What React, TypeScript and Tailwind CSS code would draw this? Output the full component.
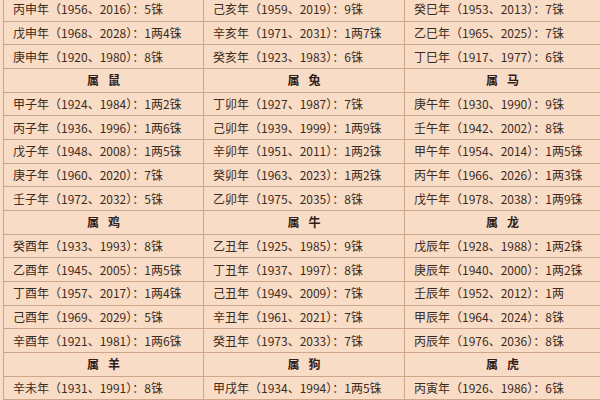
import React from "react";

type Cell = string | { h: [string, string] };

const col1: Cell[] = [
  "丙申年（1956、2016）：5铢",
  "戊申年（1968、2028）：1两4铢",
  "庚申年（1920、1980）：8铢",
  { h: ["属", "鼠"] },
  "甲子年（1924、1984）：1两2铢",
  "丙子年（1936、1996）：1两6铢",
  "戊子年（1948、2008）：1两5铢",
  "庚子年（1960、2020）：7铢",
  "壬子年（1972、2032）：5铢",
  { h: ["属", "鸡"] },
  "癸酉年（1933、1993）：8铢",
  "乙酉年（1945、2005）：1两5铢",
  "丁酉年（1957、2017）：1两4铢",
  "己酉年（1969、2029）：5铢",
  "辛酉年（1921、1981）：1两6铢",
  { h: ["属", "羊"] },
  "辛未年（1931、1991）：8铢",
];

const col2: Cell[] = [
  "己亥年（1959、2019）：9铢",
  "辛亥年（1971、2031）：1两7铢",
  "癸亥年（1923、1983）：6铢",
  { h: ["属", "兔"] },
  "丁卯年（1927、1987）：7铢",
  "己卯年（1939、1999）：1两9铢",
  "辛卯年（1951、2011）：1两2铢",
  "癸卯年（1963、2023）：1两2铢",
  "乙卯年（1975、2035）：8铢",
  { h: ["属", "牛"] },
  "乙丑年（1925、1985）：9铢",
  "丁丑年（1937、1997）：8铢",
  "己丑年（1949、2009）：7铢",
  "辛丑年（1961、2021）：7铢",
  "癸丑年（1973、2033）：7铢",
  { h: ["属", "狗"] },
  "甲戌年（1934、1994）：1两5铢",
];

const col3: Cell[] = [
  "癸巳年（1953、2013）：7铢",
  "乙巳年（1965、2025）：7铢",
  "丁巳年（1917、1977）：6铢",
  { h: ["属", "马"] },
  "庚午年（1930、1990）：9铢",
  "壬午年（1942、2002）：8铢",
  "甲午年（1954、2014）：1两5铢",
  "丙午年（1966、2026）：1两3铢",
  "戊午年（1978、2038）：1两9铢",
  { h: ["属", "龙"] },
  "戊辰年（1928、1988）：1两2铢",
  "庚辰年（1940、2000）：1两2铢",
  "壬辰年（1952、2012）：1两",
  "甲辰年（1964、2024）：8铢",
  "丙辰年（1976、2036）：8铢",
  { h: ["属", "虎"] },
  "丙寅年（1926、1986）：6铢",
];

function Column({ cells, last }: { cells: Cell[]; last?: boolean }) {
  return (
    <div className={"flex flex-col " + (last ? "" : "border-r border-[#cfa688]")}>
      {cells.map((c, i) =>
        typeof c === "string" ? (
          <div
            key={i}
            className="h-[23.67px] shrink-0 border-b border-[#cfa688] flex items-center pl-[9px] text-[12px] text-[#3b2c22] whitespace-nowrap"
          >
            {c}
          </div>
        ) : (
          <div
            key={i}
            className="h-[23.67px] shrink-0 border-b border-[#cfa688] flex items-center justify-center gap-[9px] text-[12px] font-bold text-[#2e2018]"
          >
            <span>{c.h[0]}</span>
            <span>{c.h[1]}</span>
          </div>
        )
      )}
    </div>
  );
}

export default function App() {
  return (
    <div
      className="w-[600px] h-[400px] overflow-hidden bg-[#f9dcc6] pl-[3px]"
      style={{ fontFamily: '"Noto Sans CJK SC", "Noto Sans", sans-serif' }}
    >
      <div className="-mt-[2px] grid grid-cols-[200px_201px_1fr] border-l border-[#cfa688]">
        <Column cells={col1} />
        <Column cells={col2} />
        <Column cells={col3} last />
      </div>
    </div>
  );
}
